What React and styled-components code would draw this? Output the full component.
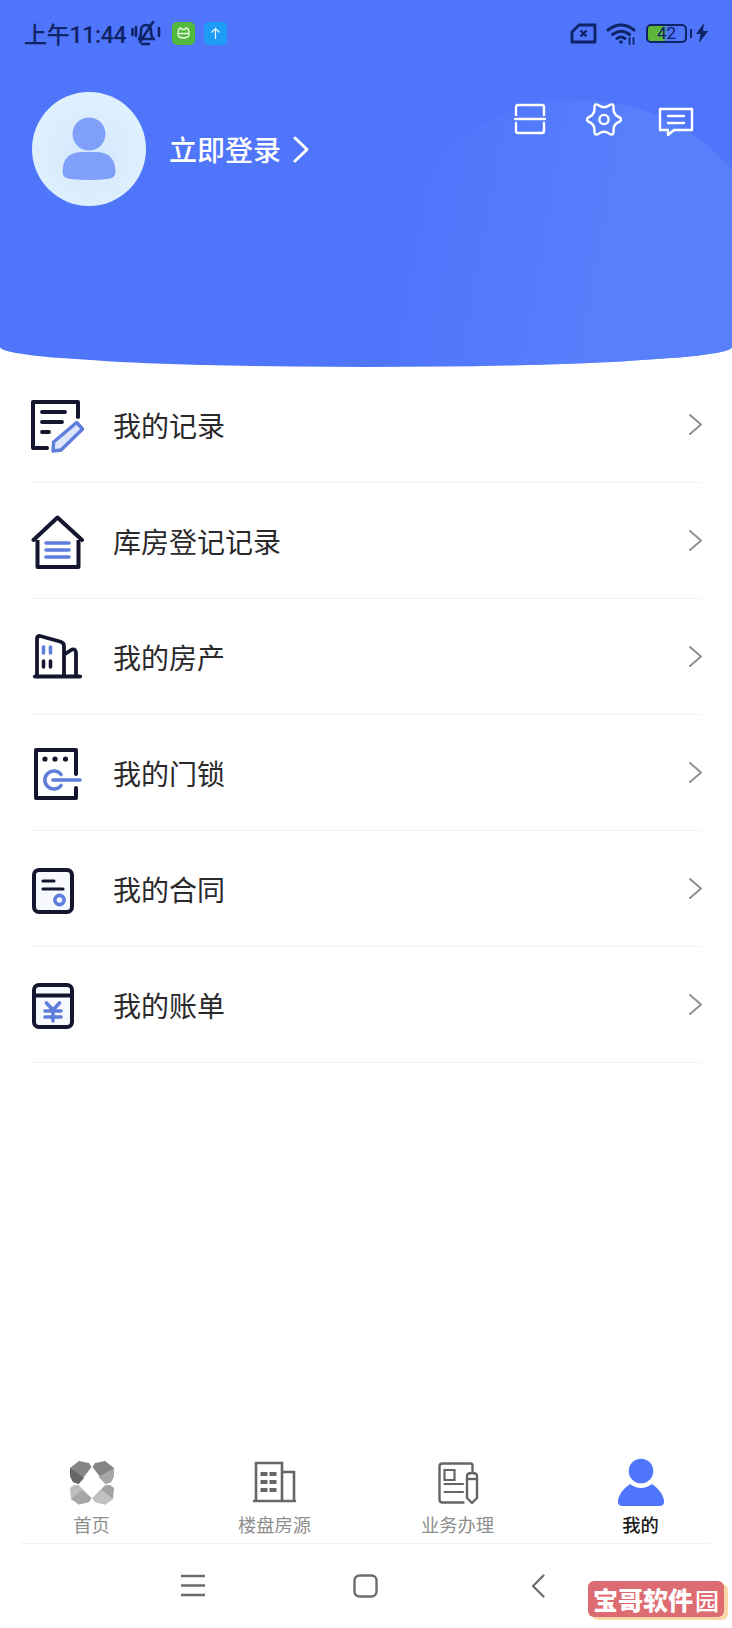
import React from "react"
import styled, { createGlobalStyle } from "styled-components"

const Global = createGlobalStyle`
  html, body {
    margin: 0;
    padding: 0;
    background: #fff;
    font-family: "Noto Sans CJK SC", "Noto Sans", sans-serif;
  }
`

const Page = styled.div`
  width: 732px;
  height: 1628px;
  position: relative;
  overflow: hidden;
  display: flex;
  flex-direction: column;
  background: #fff;
`

const Header = styled.header`
  height: 367px;
  flex: none;
  position: relative;
  overflow: hidden;
  background: #4f75fb;
  border-radius: 0 0 50% 50% / 0 0 20px 20px;
`

const Glow = styled.div`
  position: absolute;
  left: 380px;
  top: 100px;
  width: 400px;
  height: 400px;
  border-radius: 50%;
  background: linear-gradient(100deg, rgba(92, 132, 252, 0) 10%, rgba(92, 132, 252, 0.75) 60%);
`

const StatusBar = styled.div`
  position: relative;
  height: 66px;
  box-sizing: border-box;
  padding: 0 24px;
  display: flex;
  align-items: center;
  color: #0f2467;
`

const Time = styled.span`
  font-family: "Roboto", "Noto Sans CJK SC", sans-serif;
  font-size: 23px;
  letter-spacing: -0.3px;
  font-weight: 500;
  margin-right: 5px;
  white-space: nowrap;
`

const AppBadge = styled.span`
  width: 23px;
  height: 23px;
  border-radius: 5px;
  margin-left: ${(p) => p.$gap}px;
  background: ${(p) => p.$bg};
  display: flex;
  align-items: center;
  justify-content: center;
`

const StatusRight = styled.div`
  margin-left: auto;
  display: flex;
  align-items: center;
  gap: 9px;
`

const Battery = styled.div`
  width: 41px;
  height: 19px;
  box-sizing: border-box;
  border: 2px solid #0f2467;
  border-radius: 5px;
  position: relative;
  font-size: 17px;
  line-height: 15px;
  text-align: center;
  color: #0f2467;
  font-family: "Roboto", sans-serif;
  background: linear-gradient(90deg, #5db73a 0 40%, rgba(93, 183, 58, 0) 52%);

  &::after {
    content: "";
    position: absolute;
    right: -7px;
    top: 3px;
    width: 2px;
    height: 9px;
    background: #0f2467;
  }
`

const Profile = styled.div`
  position: relative;
  padding: 26px 38px 0 32px;
  display: flex;
  justify-content: space-between;
  align-items: flex-start;
`

const LoginBlock = styled.div`
  display: flex;
  align-items: center;
`

const Avatar = styled.div`
  width: 114px;
  height: 114px;
  border-radius: 50%;
  background: radial-gradient(circle at 50% 55%, #d4e8fd, #e0f1fd 75%);
  display: flex;
  align-items: center;
  justify-content: center;
`

const LoginText = styled.span`
  margin-left: 23px;
  font-size: 28px;
  font-weight: 500;
  color: #fff;
`

const LoginArrow = styled.svg`
  margin-left: 12px;
`

const Actions = styled.div`
  display: flex;
  align-items: flex-start;
  gap: 36px;
  margin-top: 11px;
`

const GearIcon = styled.svg`
  margin-left: 4px;
`

const BubbleIcon = styled.svg`
  margin-top: 4px;
`

const Menu = styled.ul`
  list-style: none;
  margin: 0;
  padding: 0;
`

const Row = styled.li`
  height: 116px;
  box-sizing: border-box;
  margin-left: 32px;
  margin-right: 30px;
  border-bottom: 1px solid #f3f3f5;
  display: flex;
  align-items: center;
`

const RowIcon = styled.svg`
  width: 56px;
  height: 56px;
  flex: none;
  margin-left: -4px;
`

const RowLabel = styled.span`
  margin-left: 29px;
  font-size: 28px;
  color: #2a2a2c;
  flex: 1;
`

const RowArrow = styled.svg`
  width: 15px;
  height: 23px;
  flex: none;
  margin-right: -1px;
`

const TabBar = styled.nav`
  margin-top: auto;
  height: 86px;
  display: grid;
  grid-template-columns: repeat(4, 183px);
`

const Tab = styled.div`
  display: flex;
  flex-direction: column;
  align-items: center;
`

const TabIcon = styled.svg`
  width: 50px;
  height: 50px;
  flex: none;
`

const TabLabel = styled.span`
  font-size: 18.3px;
  line-height: 24px;
  margin-top: 5px;
  color: ${(p) => (p.$active ? "#1a1a1a" : "#8e8e8e")};
  font-weight: ${(p) => (p.$active ? 500 : 400)};
`

const Divider = styled.div`
  height: 1px;
  flex: none;
  margin: 0 21px 0 20px;
  background: #f3f3f5;
`

const NavBar = styled.div`
  height: 84px;
  flex: none;
  box-sizing: border-box;
  padding: 30px 0 0 181px;
  display: flex;
  align-items: flex-start;
  color: #6c6c6c;
`

const NavSlot = styled.svg`
  flex: none;
  margin-right: ${(p) => p.$gap}px;
`

const Watermark = styled.div`
  position: absolute;
  left: 588px;
  top: 1581px;
  width: 136px;
  height: 36px;
  border-radius: 6px;
  background: #dc6b72;
  box-shadow: 4px 3px 0 #fbd9a6;
  color: #fff;
  font-size: 25px;
  font-weight: 900;
  line-height: 36px;
  text-align: center;
  white-space: nowrap;
`

const WatermarkLast = styled.span`
  font-weight: 500;
  font-size: 24px;
  margin-left: 2px;
`

const ink = "#14152e"
const blue = "#5f7edb"
const grey = "#666"

// wavy outline of the settings gear, lobes and dips alternate every 30deg
const gearPath = () => {
  const pts = Array.from({ length: 12 }, (_, k) => {
    const r = k % 2 === 0 ? 20 : 10.5
    const a = (k * Math.PI) / 6
    return [18 + r * Math.cos(a), 16.5 + r * Math.sin(a)]
  })
  const mid = (a, b) => [(a[0] + b[0]) / 2, (a[1] + b[1]) / 2]
  const fmt = (p) => `${p[0].toFixed(2)} ${p[1].toFixed(2)}`
  let d = `M${fmt(mid(pts[11], pts[0]))}`
  pts.forEach((p, k) => {
    d += `Q${fmt(p)} ${fmt(mid(p, pts[(k + 1) % 12]))}`
  })
  return d + "Z"
}

const rows = [
  {
    label: "我的记录",
    icon: (
      <>
        <path d="M50 20V5H5v46h14" fill="none" stroke={ink} strokeWidth="4" strokeLinecap="round" strokeLinejoin="round" />
        <path d="M14 15h23M14 25h20M14 35h7" fill="none" stroke={ink} strokeWidth="3.8" strokeLinecap="round" />
        <path d="M25 54l.6-9 23-19.5 6 6.5-21.5 21z" fill="#dfe6fa" stroke={blue} strokeWidth="3.4" strokeLinejoin="round" />
      </>
    ),
  },
  {
    label: "库房登记记录",
    icon: (
      <>
        <path d="M9.5 27v27h41V27" fill="none" stroke={ink} strokeWidth="4" strokeLinejoin="round" />
        <path d="M5.5 27L29.5 4.5 54 27" fill="none" stroke={ink} strokeWidth="4" strokeLinecap="round" strokeLinejoin="round" />
        <path d="M18 30h23M18 37h23M18 44h23" fill="none" stroke={blue} strokeWidth="3.6" strokeLinecap="round" />
      </>
    ),
  },
  {
    label: "我的房产",
    icon: (
      <>
        <path d="M7 47.5h45" stroke={ink} strokeWidth="4.2" strokeLinecap="round" />
        <path d="M9 47V10q0-3 3-3l20 5.5q4 1 4 4.5v30" fill="none" stroke={ink} strokeWidth="3.8" strokeLinejoin="round" />
        <path d="M37 25l7-4.5q4-1 4 4V47" fill="none" stroke={ink} strokeWidth="3.8" strokeLinejoin="round" />
        <path d="M15.5 18v6M22.5 18v6" stroke={blue} strokeWidth="3.6" strokeLinecap="round" />
        <path d="M15.5 32v6M22.5 32v6" stroke={ink} strokeWidth="3.6" strokeLinecap="round" />
      </>
    ),
  },
  {
    label: "我的门锁",
    icon: (
      <>
        <path d="M48 29V5H8v48h40V43" fill="none" stroke={ink} strokeWidth="4" strokeLinecap="round" strokeLinejoin="round" />
        <circle cx="17" cy="14" r="2.6" fill={ink} />
        <circle cx="27" cy="14" r="2.6" fill={ink} />
        <circle cx="37.5" cy="14" r="2.6" fill={ink} />
        <path d="M33 29.5a9 9 0 1 0 0 11" fill="none" stroke={blue} strokeWidth="3.6" strokeLinecap="round" />
        <path d="M25 35h27" stroke={blue} strokeWidth="3.6" strokeLinecap="round" />
      </>
    ),
  },
  {
    label: "我的合同",
    icon: (
      <>
        <rect x="6" y="9" width="38" height="42" rx="5" fill="#f8f9fe" stroke={ink} strokeWidth="4" />
        <path d="M15 20h11M15 28h20" stroke={ink} strokeWidth="3.2" strokeLinecap="round" />
        <circle cx="31.5" cy="39" r="4.6" fill="none" stroke={blue} strokeWidth="3.6" />
      </>
    ),
  },
  {
    label: "我的账单",
    icon: (
      <>
        <rect x="6" y="8" width="38" height="42" rx="5" fill="#f8f9fe" stroke={ink} strokeWidth="4" />
        <path d="M6 18.5h38" stroke={ink} strokeWidth="3.8" />
        <path d="M18.5 26l6.5 7 6.5-7M17 34h16M17 40h16M25 33v11" fill="none" stroke={blue} strokeWidth="3.6" strokeLinecap="round" strokeLinejoin="round" />
      </>
    ),
  },
]

const tabs = [
  {
    label: "首页",
    icon: (
      <>
        <path d="M3 11l9-7 10 2 2.500 4-13 17-5.500-2-3-6z" fill="#858585" />
        <path d="M3 11l14 10-5.500 6-5.500-2-3-6z" fill="#666" />
        <path d="M47 11l-9-7-10 2-2.500 4 13 17 5.500-2 3-6z" fill="#848484" />
        <path d="M47 11v8l-3 6-5.500 2-7-7z" fill="#a8a8a8" />
        <path d="M3 31l4-3h4.500l13 13-2.500 4-10 2.500-8-5.500z" fill="#bdbdbd" />
        <path d="M4 42l11-9 9.500 8-2.500 4-10 2.500z" fill="#a6a6a6" />
        <path d="M47 31l-4-3h-4.500l-13 13 2.500 4 10 2.500 8-5.500z" fill="#a2a2a2" />
        <path d="M25.500 41l2.500 4 10 2.500 8-5.500-11-9z" fill="#c2c2c2" />
      </>
    ),
  },
  {
    label: "楼盘房源",
    icon: (
      <>
        <path d="M4 44h41" stroke={grey} strokeWidth="2.6" strokeLinecap="round" />
        <path d="M6 44V6h26v38M32 15h12v29" fill="none" stroke={grey} strokeWidth="2.6" />
        <path d="M10.5 15h7v4h-7zM19.5 15h7v4h-7zM10.5 23h7v4h-7zM19.5 23h7v4h-7zM10.5 31h7v4h-7zM19.5 31h7v4h-7z" fill={grey} />
      </>
    ),
  },
  {
    label: "业务办理",
    icon: (
      <>
        <path d="M39.5 14V8.500q0-2-2-2H9.500q-3 0-3 3v33q0 3 3 3h21" fill="none" stroke={grey} strokeWidth="2.4" strokeLinecap="round" />
        <path d="M11.5 13h10v10h-10z" fill="none" stroke={grey} strokeWidth="2.2" />
        <path d="M11.5 27H30M11.5 35H30" stroke={grey} strokeWidth="2.2" strokeLinecap="round" />
        <path d="M34 19q0-3 5-3t5 3v22l-5 5-5-5z" fill="#fff" stroke={grey} strokeWidth="2.4" strokeLinejoin="round" />
        <path d="M34 22h10" stroke={grey} strokeWidth="2.4" />
      </>
    ),
  },
  {
    label: "我的",
    active: true,
    icon: (
      <>
        <circle cx="25" cy="14" r="12.3" fill="#4f75fb" />
        <path d="M2 43q2-9 12-16 11 8 22 0 10 7 12 16 1 6-5 6H7q-6 0-5-6z" fill="#4f75fb" />
      </>
    ),
  },
]

const App = () => (
  <Page>
    <Global />
    <Header>
      <Glow />
      <StatusBar>
        <Time>上午11:44</Time>
        <svg width="30" height="26" viewBox="0 0 30 26" fill="none" stroke="#0f2467" strokeWidth="2.6" strokeLinecap="round" strokeLinejoin="round">
          <path d="M8 19q2-2 2-8 0-6 5-6t5 6q0 6 3 8zM11 24h7M22 2L9 22M1.500 9v6M5 7v9M28 8v8" />
        </svg>
        <AppBadge $bg="#53b93c" $gap={11}>
          <svg width="15" height="14" viewBox="0 0 15 14" fill="none" stroke="#eefce6" strokeWidth="1.3">
            <path d="M3 3.500a1.500 1.500 0 0 1 3 0h3a1.500 1.500 0 0 1 3 0q1.500 2 1 4 1 4-5.500 4.500Q1 11.500 2 7.500q-.5-2 1-4zM2.500 7.500h10" />
          </svg>
        </AppBadge>
        <AppBadge $bg="#1d9cf5" $gap={9}>
          <svg width="13" height="13" viewBox="0 0 13 13" fill="none" stroke="#e8f6ff" strokeWidth="1.2">
            <path d="M6.500 12V1.500M2.500 5.500l4-4 4 4" />
          </svg>
        </AppBadge>
        <StatusRight>
          <svg width="27" height="21" viewBox="0 0 27 21" fill="none" stroke="#0f2467" strokeWidth="2.8" strokeLinejoin="round">
            <path d="M9 2h16v17H2V9z" />
            <path d="M10.500 7.500l6 6M16.500 7.500l-6 6" strokeWidth="2.4" />
          </svg>
          <svg width="31" height="23" viewBox="0 0 31 23" fill="none" stroke="#0f2467" strokeWidth="3" strokeLinecap="round">
            <path d="M2 8q13-10 26 0M6.500 12.500q9-6.500 17 0M11 16.500q4.500-3 8 0" />
            <circle cx="15" cy="20" r="1.8" fill="#0f2467" stroke="none" />
            <path d="M23.500 16v6M27.500 16v6" strokeWidth="1.8" />
          </svg>
          <Battery>42</Battery>
          <svg width="12" height="20" viewBox="0 0 12 20">
            <path d="M8 0L0 11h4.500L3 20l9-12H7z" fill="#0f2467" />
          </svg>
        </StatusRight>
      </StatusBar>
      <Profile>
        <LoginBlock>
          <Avatar>
            <svg width="56" height="66" viewBox="0 0 56 66">
              <circle cx="28" cy="18" r="16.5" fill="#7f9ff8" />
              <path d="M1.500 56q0-20 20-20h13q20 0 20 20 0 6-8 7-18 2-37 0-8-1-8-7z" fill="#7f9ff8" />
            </svg>
          </Avatar>
          <LoginText>立即登录</LoginText>
          <LoginArrow width="16" height="27" viewBox="0 0 16 27" fill="none" stroke="#fff" strokeWidth="3" strokeLinecap="round" strokeLinejoin="round">
            <path d="M2 2l12 11.500L2 25" />
          </LoginArrow>
        </LoginBlock>
        <Actions>
          <svg width="32" height="32" viewBox="0 0 32 32" fill="none" stroke="#fff" strokeWidth="2.4" strokeLinecap="round">
            <path d="M2 12V4q0-2 2-2h24q2 0 2 2v8M2 20v8q0 2 2 2h24q2 0 2-2v-8M1 16h30" />
          </svg>
          <GearIcon width="36" height="33" viewBox="0 0 36 33" fill="none" stroke="#fff" strokeWidth="2.4" strokeLinejoin="round">
            <path d={gearPath()} />
            <circle cx="18" cy="16.5" r="4.6" />
          </GearIcon>
          <BubbleIcon width="36" height="30" viewBox="0 0 36 30" fill="none" stroke="#fff" strokeWidth="2.4" strokeLinejoin="round" strokeLinecap="round">
            <path d="M2 2h32v21H16l-6 5v-5H2zM10 9h16M10 16h16" />
          </BubbleIcon>
        </Actions>
      </Profile>
    </Header>
    <Menu>
      {rows.map((row) => (
        <Row key={row.label}>
          <RowIcon viewBox="0 0 56 56">{row.icon}</RowIcon>
          <RowLabel>{row.label}</RowLabel>
          <RowArrow viewBox="0 0 15 23" fill="none" stroke="#8f8f8f" strokeWidth="2" strokeLinecap="round" strokeLinejoin="round">
            <path d="M2 2l11 9.500L2 21" />
          </RowArrow>
        </Row>
      ))}
    </Menu>
    <TabBar>
      {tabs.map((tab) => (
        <Tab key={tab.label}>
          <TabIcon viewBox="0 0 50 50">{tab.icon}</TabIcon>
          <TabLabel $active={tab.active}>{tab.label}</TabLabel>
        </Tab>
      ))}
    </TabBar>
    <Divider />
    <NavBar>
      <NavSlot $gap={148} width="24" height="23" viewBox="0 0 24 23" stroke="currentColor" strokeWidth="2.4">
        <path d="M0 2h24M0 11.500h24M0 21h24" />
      </NavSlot>
      <NavSlot $gap={153} width="25" height="24" viewBox="0 0 25 24" fill="none" stroke="currentColor" strokeWidth="2.4">
        <rect x="1.500" y="1.500" width="22" height="21" rx="5" />
      </NavSlot>
      <NavSlot $gap={0} width="14" height="24" viewBox="0 0 14 24" fill="none" stroke="currentColor" strokeWidth="2.2" strokeLinecap="round" strokeLinejoin="round">
        <path d="M12.500 1.500L2 12l10.500 10.500" />
      </NavSlot>
    </NavBar>
    <Watermark>
      宝哥软件<WatermarkLast>园</WatermarkLast>
    </Watermark>
  </Page>
)

export default App
